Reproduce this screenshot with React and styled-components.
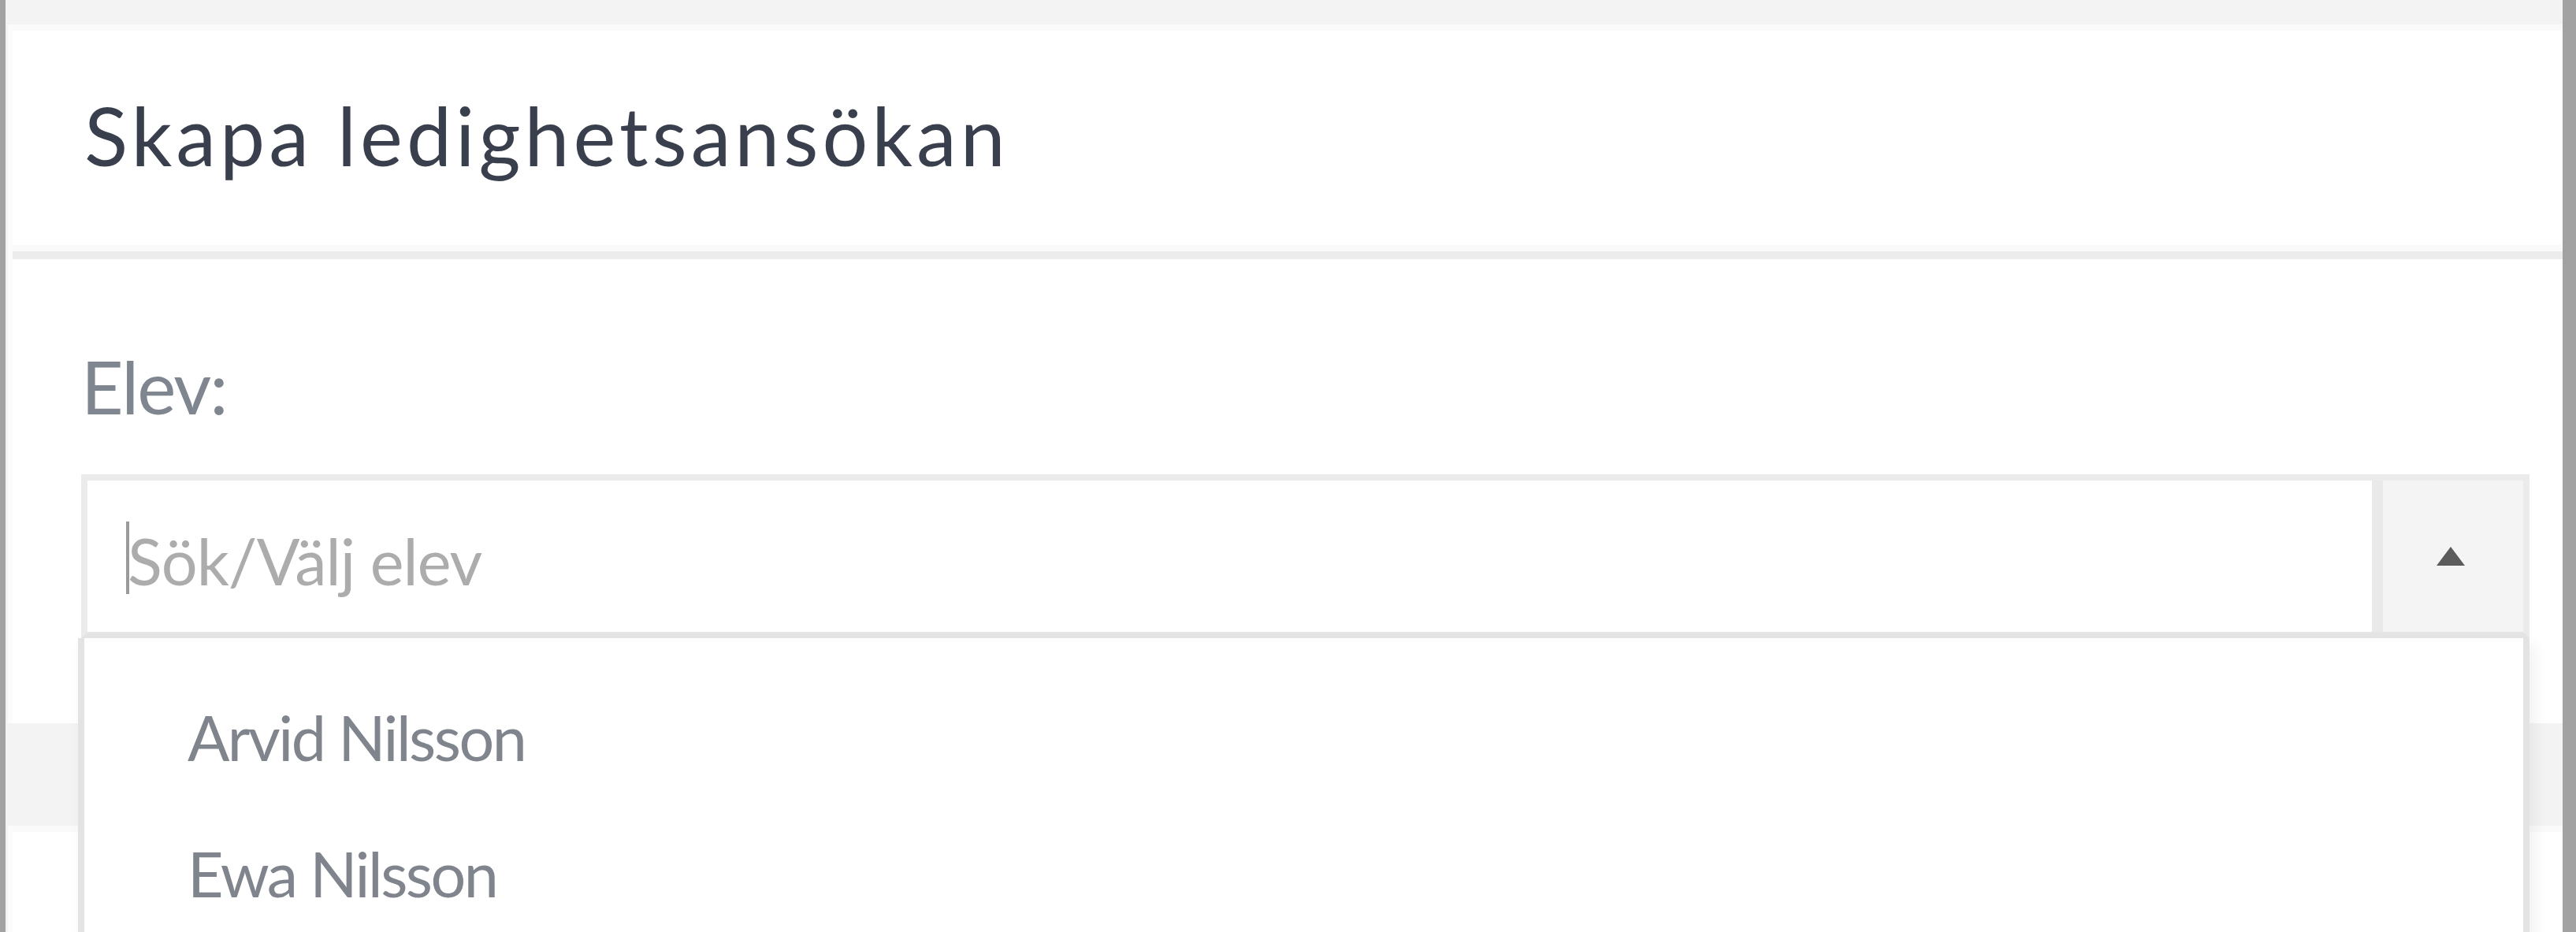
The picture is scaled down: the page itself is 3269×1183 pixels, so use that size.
import React from 'react';
import styled, { createGlobalStyle } from 'styled-components';

// ============================================================
//  GLOBAL
// ============================================================
const GlobalStyle = createGlobalStyle`
  html, body {
    margin: 0;
    padding: 0;
    height: 1183px;
    overflow: hidden;
    background: #f3f3f3;
  }
  * { box-sizing: border-box; }
`;

// ============================================================
//  LAYOUT
// ============================================================
const Screen = styled.div`
  display: flex;
  width: 3269px;
  height: 1183px;
  font-family: Lato, "Open Sans", sans-serif;
`;

const EdgeBar = styled.div`
  flex: 0 0 ${({ $w }) => $w}px;
  background: #a2a2a2;
`;

const Main = styled.main`
  flex: 1;
  display: flex;
  flex-direction: column;
  gap: 130px;
  padding: 31px 0 0 3px;
  background: #f3f3f3;
  overflow: hidden;
`;

const Card = styled.section`
  position: relative;
  background: #fff;
  border-top: 8px solid #fafafa;
  border-left: 6px solid #fbfbfb;
  flex: ${({ $grow }) => ($grow ? 1 : 'none')};
`;

const CardHeader = styled.header`
  padding: 72px 40px 86px 91px;
  border-bottom: 10px solid #ececec;
  box-shadow: 0 -8px 0 #fafafa inset;
`;

const Title = styled.h1`
  margin: 0;
  font-size: 102px;
  line-height: 1.2;
  font-weight: 400;
  letter-spacing: 5px;
  color: #3a3f4d;
`;

const CardBody = styled.div`
  padding: 106px 42px 108px 87px;
`;

const Label = styled.label`
  display: block;
  font-size: 93px;
  line-height: 1.2;
  letter-spacing: -2px;
  color: #80868f;
  margin-bottom: 55px;
`;

// ============================================================
//  SELECT
// ============================================================
const SelectWrap = styled.div`
  position: relative;
  z-index: 2;
`;

const SelectBox = styled.div`
  display: flex;
  height: 208px;
  border: 8px solid #ebebeb;
  border-bottom-color: #e5e5e5;
  background: #fff;
`;

const SearchField = styled.div`
  flex: 1;
  display: flex;
  align-items: center;
  padding: 12px 0 0 49px;
  font-size: 81px;
  line-height: 1.2;
  letter-spacing: -1px;
  color: #acacac;
`;

const Caret = styled.span`
  display: inline-block;
  width: 4px;
  height: 92px;
  margin: -8px -2px 0 0;
  background: #9a9a9a;
`;

const ToggleButton = styled.button`
  flex: 0 0 192px;
  display: flex;
  align-items: center;
  justify-content: center;
  padding: 0 6px 0 0;
  border: none;
  border-left: 14px solid #e9e9e9;
  background: #f4f4f4;
  cursor: pointer;
`;

const Dropdown = styled.ul`
  position: absolute;
  top: 100%;
  left: -4px;
  right: 0;
  margin: 0;
  padding: 40px 0 0;
  list-style: none;
  background: #fff;
  border: 8px solid #e3e3e3;
  border-top: none;
  box-shadow: 6px 8px 18px rgba(0, 0, 0, 0.06);
  height: 420px;
`;

const Option = styled.li`
  display: flex;
  align-items: center;
  height: 173px;
  padding-left: 131px;
  font-size: 79px;
  line-height: 1.2;
  letter-spacing: -2.5px;
  color: #80848d;
`;

const students = ['Arvid Nilsson', 'Ewa Nilsson'];

export default function App() {
  return (
    <>
      <GlobalStyle />
      <Screen>
        <EdgeBar $w={7} />
        <Main>
          <Card>
            <CardHeader>
              <Title>Skapa ledighetsansökan</Title>
            </CardHeader>
            <CardBody>
              <Label>Elev:</Label>
              <SelectWrap>
                <SelectBox>
                  <SearchField>
                    <Caret />
                    Sök/Välj elev
                  </SearchField>
                  <ToggleButton aria-label="Stäng lista">
                    <svg width="38" height="26" viewBox="0 0 38 26">
                      <polygon points="19,1 37,25 1,25" fill="#5c5c5c" />
                    </svg>
                  </ToggleButton>
                </SelectBox>
                <Dropdown>
                  {students.map(name => (
                    <Option key={name}>{name}</Option>
                  ))}
                </Dropdown>
              </SelectWrap>
            </CardBody>
          </Card>
          <Card $grow />
        </Main>
        <EdgeBar $w={17} />
      </Screen>
    </>
  );
}
